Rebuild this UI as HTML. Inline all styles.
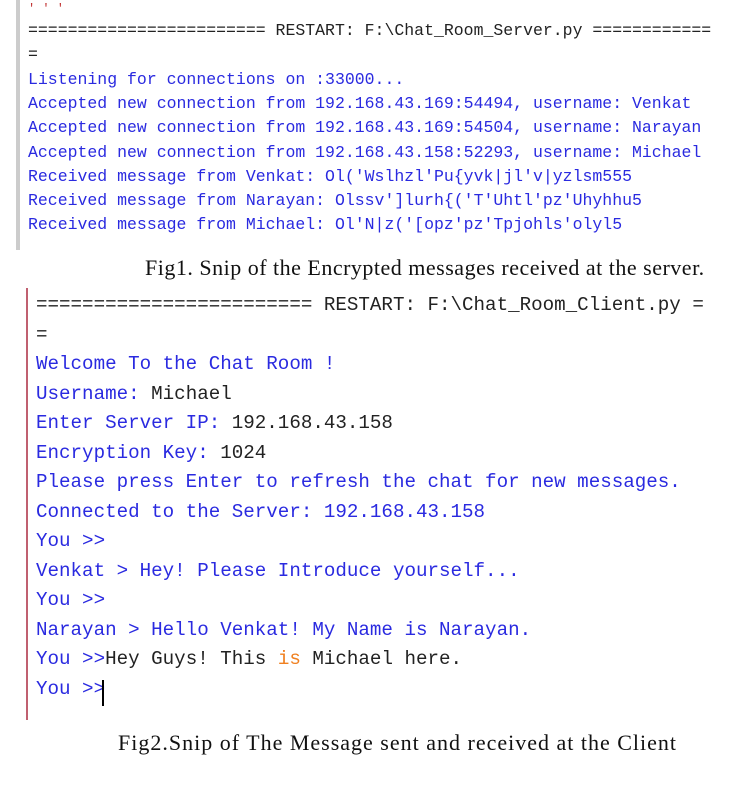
<!DOCTYPE html>
<html><head><style>
body{margin:0;width:738px;height:789px;background:#fff;position:relative;overflow:hidden}
.m{position:absolute;white-space:pre;font-family:"Liberation Mono",monospace}
.a{font-size:16.5px;left:28px}
.b{font-size:19.2px;left:36px}
.u{color:#2a2ae0}
.k{color:#222}
.o{color:#f08020}
.cap{position:absolute;font-family:"Liberation Serif",serif;font-size:22px;color:#111;white-space:pre}
</style></head><body>
<div style="position:absolute;left:16px;top:0;width:4px;height:250px;background:#ccc"></div>
<div class="m a" style="top:2px;color:#c03030;font-size:12px">' ' '</div>
<div class="m a k" style="top:21px">======================== RESTART: F:\Chat_Room_Server.py ============</div>
<div class="m a k" style="top:45px">=</div>
<div class="m a u" style="top:70px">Listening for connections on :33000...</div>
<div class="m a u" style="top:94px">Accepted new connection from 192.168.43.169:54494, username: Venkat</div>
<div class="m a u" style="top:118px">Accepted new connection from 192.168.43.169:54504, username: Narayan</div>
<div class="m a u" style="top:143px">Accepted new connection from 192.168.43.158:52293, username: Michael</div>
<div class="m a u" style="top:167px">Received message from Venkat: Ol('Wslhzl'Pu{yvk|jl'v|yzlsm555</div>
<div class="m a u" style="top:191px">Received message from Narayan: Olssv']lurh{('T'Uhtl'pz'Uhyhhu5</div>
<div class="m a u" style="top:215px">Received message from Michael: Ol'N|z('[opz'pz'Tpjohls'olyl5</div>
<div class="cap" style="left:145px;top:255px;letter-spacing:0.5px">Fig1. Snip of the Encrypted messages received at the server.</div>
<div style="position:absolute;left:26px;top:288px;width:2px;height:432px;background:#c06070"></div>
<div class="m b k" style="top:294px">======================== RESTART: F:\Chat_Room_Client.py =</div>
<div class="m b k" style="top:324px">=</div>
<div class="m b u" style="top:353px">Welcome To the Chat Room !</div>
<div class="m b u" style="top:383px">Username: <span class="k">Michael</span></div>
<div class="m b u" style="top:412px">Enter Server IP: <span class="k">192.168.43.158</span></div>
<div class="m b u" style="top:442px">Encryption Key: <span class="k">1024</span></div>
<div class="m b u" style="top:471px">Please press Enter to refresh the chat for new messages.</div>
<div class="m b u" style="top:501px">Connected to the Server: 192.168.43.158</div>
<div class="m b u" style="top:530px">You &gt;&gt;</div>
<div class="m b u" style="top:560px">Venkat &gt; Hey! Please Introduce yourself...</div>
<div class="m b u" style="top:589px">You &gt;&gt;</div>
<div class="m b u" style="top:619px">Narayan &gt; Hello Venkat! My Name is Narayan.</div>
<div class="m b u" style="top:648px">You &gt;&gt;<span class="k">Hey Guys! This <span class="o">is</span> Michael here.</span></div>
<div class="m b u" style="top:678px">You &gt;&gt;</div>
<div style="position:absolute;left:102px;top:680px;width:2px;height:26px;background:#000"></div>
<div class="cap" style="left:118px;top:730px;letter-spacing:1px">Fig2.Snip of The Message sent and received at the Client</div>
</body></html>
